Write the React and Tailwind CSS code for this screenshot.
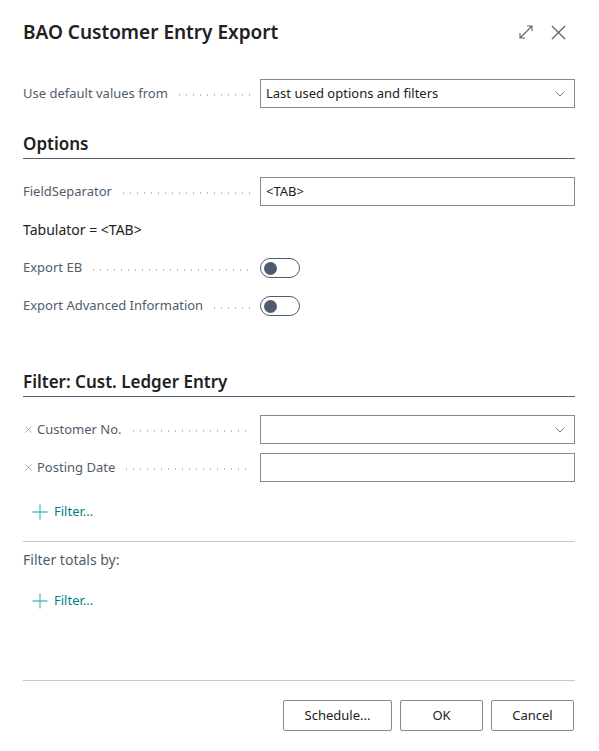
import { ChevronDown, X, Plus } from "lucide-react";

const font = { fontFamily: "'Noto Sans', 'Open Sans', sans-serif" };

const Dots = () => (
  <span className="flex-1 h-[2px] ml-2 mt-[3px] bg-[radial-gradient(circle,#bcbcbc_0.7px,transparent_0.8px)] bg-[length:7px_2px] bg-repeat-x" />
);

const Label = ({ text, removable }) => (
  <div className="flex items-center w-[237px] pr-[9px] text-[13px] text-[#505c6d]">
    {removable && <X size={11} strokeWidth={1.5} className="mr-[3px] text-[#8a8a8a]" />}
    <span className="whitespace-nowrap">{text}</span>
    <Dots />
  </div>
);

const Field = ({ value, select }) => (
  <div className="flex-1 h-[29px] border border-[#8a8a8a] flex items-center px-[5px] text-[13px] text-[#212121]">
    <span className="flex-1">{value}</span>
    {select && <ChevronDown size={16} strokeWidth={1.2} className="text-[#505c6d] mr-[1px]" />}
  </div>
);

const Toggle = () => (
  <div className="w-[40px] h-[20px] rounded-full border border-[#505c6d] flex items-center px-[3px]">
    <div className="w-[13px] h-[13px] rounded-full bg-[#505c6d]" />
  </div>
);

const Heading = ({ children }) => (
  <div className="border-b border-[#505c6d] pb-[2px]">
    <h2 className="text-[17px] leading-[24px] font-semibold text-[#212121]">{children}</h2>
  </div>
);

const AddFilter = () => (
  <div className="flex items-center gap-[2px] text-[13px] text-[#00807f] pl-[5px]">
    <Plus size={24} strokeWidth={1.3} className="text-[#5fbfbd]" />
    <span>Filter...</span>
  </div>
);

export default function App() {
  return (
    <div className="w-[599px] h-[751px] bg-white flex flex-col px-[23px] pr-[24px]" style={font}>
      <div className="flex items-center justify-between pt-[17px] h-[47px]">
        <h1 className="text-[19px] font-semibold text-[#212121]">BAO Customer Entry Export</h1>
        <div className="flex items-center gap-[12px] mr-[4px]">
          <svg width="16" height="16" viewBox="0 0 16 16" fill="none" stroke="#616161" strokeWidth="1.1">
            <path d="M2 14 L14 2 M9 2 H14 V7 M2 9 V14 H7" />
          </svg>
          <X size={25} strokeWidth={1.2} className="text-[#616161]" />
        </div>
      </div>

      <div className="flex items-center mt-[32px]">
        <Label text="Use default values from" />
        <Field value="Last used options and filters" select />
      </div>

      <div className="mt-[24px]">
        <Heading>Options</Heading>
      </div>

      <div className="flex items-center mt-[18px]">
        <Label text="FieldSeparator" />
        <Field value="<TAB>" />
      </div>
      <div className="mt-[13px] text-[14px] text-[#212121]">Tabulator = &lt;TAB&gt;</div>
      <div className="flex items-center mt-[18px] h-[20px]">
        <Label text="Export EB" />
        <Toggle />
      </div>
      <div className="flex items-center mt-[18px] h-[20px]">
        <Label text="Export Advanced Information" />
        <Toggle />
      </div>

      <div className="mt-[54px]">
        <Heading>Filter: Cust. Ledger Entry</Heading>
      </div>

      <div className="flex items-center mt-[18px]">
        <Label text="Customer No." removable />
        <Field value="" select />
      </div>
      <div className="flex items-center mt-[9px]">
        <Label text="Posting Date" removable />
        <Field value="" />
      </div>

      <div className="mt-[18px]">
        <AddFilter />
      </div>

      <div className="border-t border-[#c8c8c8] mt-[17px]" />
      <div className="mt-[7px] text-[14px] text-[#505c6d]">Filter totals by:</div>
      <div className="mt-[19px]">
        <AddFilter />
      </div>

      <div className="flex-1" />
      <div className="border-t border-[#c8c8c8]" />
      <div className="flex justify-end gap-[8px] pt-[19px] pb-[20px] pr-[1px]">
        <button className="w-[109px] h-[31px] border border-[#8a8a8a] rounded-[2px] text-[13px] text-[#212121]">Schedule...</button>
        <button className="w-[83px] h-[31px] border border-[#8a8a8a] rounded-[2px] text-[13px] text-[#212121]">OK</button>
        <button className="w-[83px] h-[31px] border border-[#8a8a8a] rounded-[2px] text-[13px] text-[#212121]">Cancel</button>
      </div>
    </div>
  );
}
